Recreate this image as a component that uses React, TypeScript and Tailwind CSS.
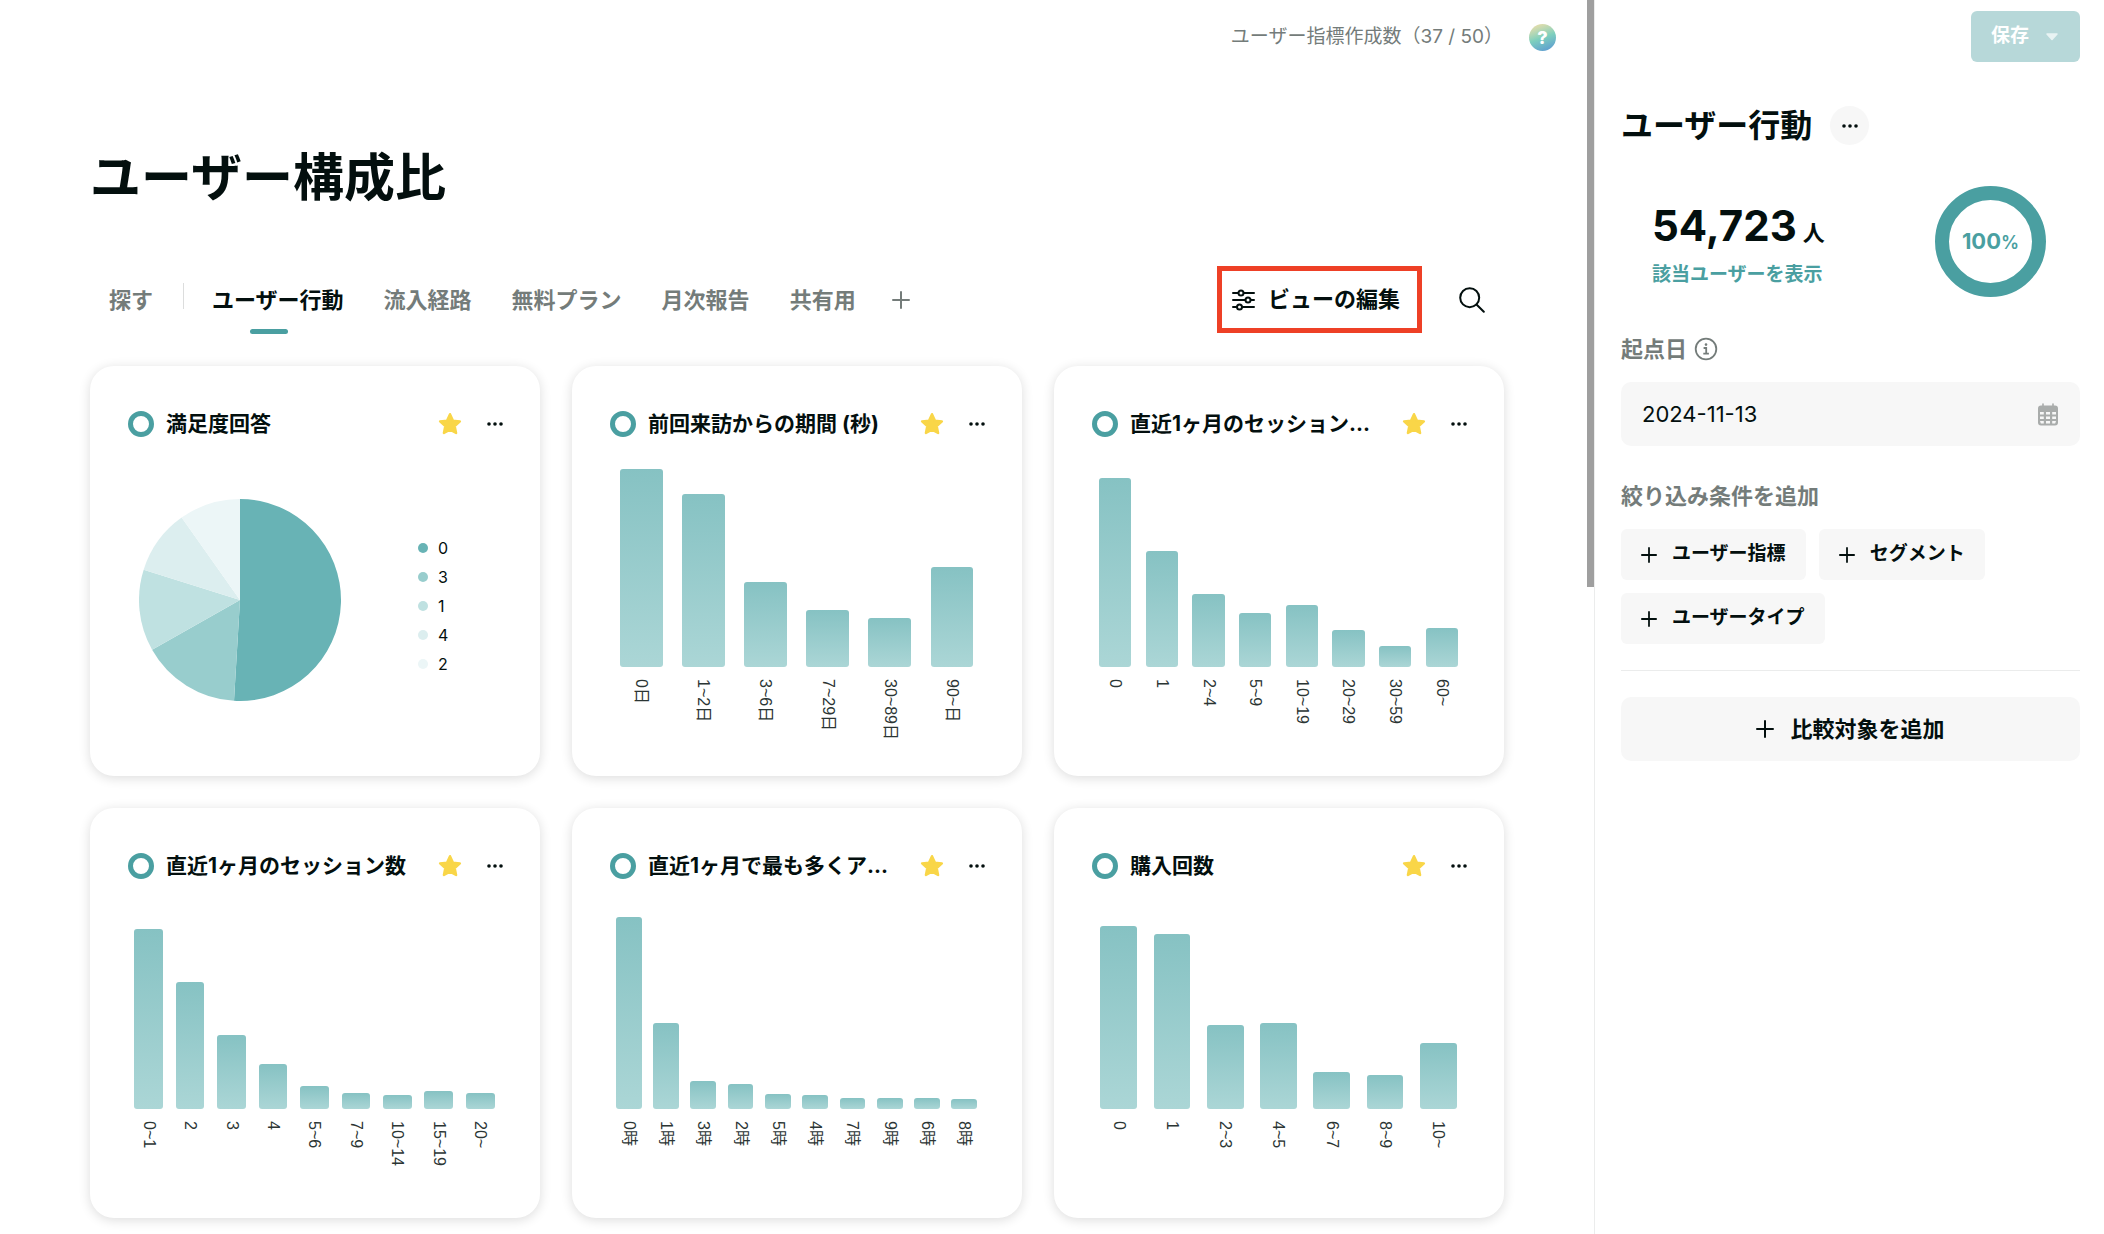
import React from "react";

interface Bar {
  label: string;
  value: number;
}

interface ChartData {
  title: string;
  bars?: Bar[];
}

const charts: ChartData[] = [
  { title: "満足度回答" },
  {
    title: "前回来訪からの期間 (秒)",
    bars: [
      { label: "0日", value: 198 },
      { label: "1~2日", value: 173 },
      { label: "3~6日", value: 85 },
      { label: "7~29日", value: 57 },
      { label: "30~89日", value: 49 },
      { label: "90~日", value: 100 },
    ],
  },
  {
    title: "直近1ヶ月のセッション...",
    bars: [
      { label: "0", value: 189 },
      { label: "1", value: 116 },
      { label: "2~4", value: 73 },
      { label: "5~9", value: 54 },
      { label: "10~19", value: 62 },
      { label: "20~29", value: 37 },
      { label: "30~59", value: 21 },
      { label: "60~", value: 39 },
    ],
  },
  {
    title: "直近1ヶ月のセッション数",
    bars: [
      { label: "0~1", value: 180 },
      { label: "2", value: 127 },
      { label: "3", value: 74 },
      { label: "4", value: 45 },
      { label: "5~6", value: 23 },
      { label: "7~9", value: 16 },
      { label: "10~14", value: 14 },
      { label: "15~19", value: 18 },
      { label: "20~", value: 16 },
    ],
  },
  {
    title: "直近1ヶ月で最も多くア...",
    bars: [
      { label: "0時", value: 192 },
      { label: "1時", value: 86 },
      { label: "3時", value: 28 },
      { label: "2時", value: 25 },
      { label: "5時", value: 15 },
      { label: "4時", value: 14 },
      { label: "7時", value: 11 },
      { label: "9時", value: 11 },
      { label: "6時", value: 11 },
      { label: "8時", value: 10 },
    ],
  },
  {
    title: "購入回数",
    bars: [
      { label: "0", value: 183 },
      { label: "1", value: 175 },
      { label: "2~3", value: 84 },
      { label: "4~5", value: 86 },
      { label: "6~7", value: 37 },
      { label: "8~9", value: 34 },
      { label: "10~", value: 66 },
    ],
  },
];

// start and end are degrees, clockwise from the top
const slices = [
  { label: "0", start: 0, end: 183.4, color: "#68b3b5" },
  { label: "3", start: 183.4, end: 240.5, color: "#98cdcd" },
  { label: "1", start: 240.5, end: 287.5, color: "#bfe1e1" },
  { label: "4", start: 287.5, end: 324.7, color: "#dceeef" },
  { label: "2", start: 324.7, end: 360, color: "#ecf6f7" },
];

const tabs = ["流入経路", "無料プラン", "月次報告", "共有用"];

const filters = ["ユーザー指標", "セグメント", "ユーザータイプ"];

const PlusIcon = ({ className }: { className: string }) => (
  <svg viewBox="0 0 18 18" className={className} fill="none" aria-hidden="true">
    <path
      d="M9 1v16M1 9h16"
      stroke="currentColor"
      strokeWidth="2"
      strokeLinecap="round"
    />
  </svg>
);

const DotsIcon = () => (
  <svg
    viewBox="0 0 16 4"
    className="w-4 h-1"
    fill="currentColor"
    aria-hidden="true"
  >
    <circle cx="2" cy="2" r="1.8" />
    <circle cx="8" cy="2" r="1.8" />
    <circle cx="14" cy="2" r="1.8" />
  </svg>
);

const StarIcon = () => (
  <svg viewBox="0 0 24 24" className="w-6 h-6" aria-hidden="true">
    <path
      d="M12 2.2l2.9 6.4 7 .8-5.2 4.7 1.4 6.9L12 17.6l-6.1 3.4 1.4-6.9L2.1 9.4l7-.8z"
      fill="#f9d648"
      stroke="#f9d648"
      strokeWidth="2.4"
      strokeLinejoin="round"
    />
  </svg>
);

const SlidersIcon = () => (
  <svg
    viewBox="0 0 23 22"
    className="w-[23px] h-[22px]"
    fill="none"
    stroke="currentColor"
    strokeWidth="2"
    strokeLinecap="round"
    aria-hidden="true"
  >
    <path d="M1 4h5M12 4h10M1 11h12M19 11h3M1 18h3.500M11 18h11" />
    <circle cx="9" cy="4" r="2.500" />
    <circle cx="16" cy="11" r="2.500" />
    <circle cx="7.500" cy="18" r="2.500" />
  </svg>
);

const SearchIcon = () => (
  <svg
    viewBox="0 0 26 26"
    className="w-[26px] h-[26px]"
    fill="none"
    stroke="currentColor"
    strokeWidth="2"
    strokeLinecap="round"
    aria-hidden="true"
  >
    <circle cx="10.700" cy="10.700" r="9.500" />
    <path d="M17.500 17.500l7.300 7.300" />
  </svg>
);

const InfoIcon = () => (
  <svg
    viewBox="0 0 24 24"
    className="w-6 h-6"
    fill="none"
    stroke="currentColor"
    strokeWidth="1.800"
    aria-hidden="true"
  >
    <circle cx="12" cy="12" r="10.300" />
    <path d="M9.600 11h2.600v5.600M9.300 16.600h5.600" />
    <circle cx="12" cy="7.600" r="1.300" fill="currentColor" stroke="none" />
  </svg>
);

const CalendarIcon = () => (
  <svg viewBox="0 0 20 23" className="w-5 h-[23px]" aria-hidden="true">
    <path
      d="M5 1v4M15 1v4"
      stroke="#a9acab"
      strokeWidth="1.600"
      strokeLinecap="round"
    />
    <rect x="0" y="2.500" width="20" height="20" rx="3" fill="#a9acab" />
    <path
      d="M2 9h3.800v2.500H2zM8 9h4v2.500H8zM14.200 9H18v2.500h-3.800zM2 13.500h3.800V16H2zM8 13.500h4V16H8zM14.200 13.500H18V16h-3.800zM2 18h3.800v2.500H2.800zM8 18h4v2.500H8zM14.200 18H18l-.8 2.500h-3z"
      fill="#f7f7f7"
    />
  </svg>
);

function point(angle: number) {
  const rad = (angle * Math.PI) / 180;
  return `${101 + 101 * Math.sin(rad)} ${101 - 101 * Math.cos(rad)}`;
}

const PieChart = () => (
  <div className="flex items-start gap-[77px] pl-[11px] pt-[62px]">
    <svg viewBox="0 0 202 202" className="w-[202px] h-[202px] shrink-0">
      {slices.map(({ label, start, end, color }) => (
        <path
          key={label}
          d={`M101 101L${point(start)}A101 101 0 ${
            end - start > 180 ? 1 : 0
          } 1 ${point(end)}z`}
          fill={color}
        />
      ))}
    </svg>
    <ul className="flex flex-col gap-[5px] pt-[37px]">
      {slices.map(({ label, color }) => (
        <li
          key={label}
          className="flex items-center gap-[10px] text-base leading-6"
        >
          <span
            className="w-[10px] h-[10px] rounded-full"
            style={{ backgroundColor: color }}
          ></span>
          {label}
        </li>
      ))}
    </ul>
  </div>
);

const BarChart = ({ bars }: { bars: Bar[] }) => (
  <div className="flex pr-px">
    {bars.map(({ label, value }) => (
      <div key={label} className="flex-1 flex flex-col items-center gap-3">
        <div className="h-[230px] w-full flex items-end justify-center">
          <div
            className="w-[69%] rounded-[3px] bg-linear-to-b from-[#86c2c3] to-[#abd6d6]"
            style={{ height: value }}
          ></div>
        </div>
        <span className="font-['Liberation_Sans','Noto_Sans_CJK_JP',sans-serif] text-base leading-4 text-[#2b3534] whitespace-nowrap [writing-mode:vertical-rl] [text-orientation:sideways]">
          {label}
        </span>
      </div>
    ))}
  </div>
);

const ChartCard = ({ title, bars }: ChartData) => (
  <article className="h-[410px] rounded-3xl bg-white px-[38px] pt-[45px] shadow-[0_2px_12px_rgba(0,0,0,0.14)]">
    <div className="flex items-center h-[26px]">
      <span className="w-[26px] h-[26px] shrink-0 rounded-full border-[5px] border-[#4a9fa1]"></span>
      <h2 className="ml-3 flex-1 min-w-0 truncate text-[21px] leading-[26px] font-bold">
        {title}
      </h2>
      <button aria-label="お気に入り" className="ml-6 cursor-pointer">
        <StarIcon />
      </button>
      <button
        aria-label="メニュー"
        className="w-6 h-6 ml-[21px] -mr-[5px] flex items-center justify-center cursor-pointer"
      >
        <DotsIcon />
      </button>
    </div>
    {bars ? <BarChart bars={bars} /> : <PieChart />}
  </article>
);

const Sidebar = () => (
  <aside className="w-[510px] shrink-0 border-l border-[#ebecec] pl-[26px] pr-6 pt-[11px]">
    <div className="flex justify-end">
      <button className="h-[51px] pl-5 pr-[21px] flex items-center gap-4 rounded-md bg-[#b7d8d9] text-white text-[19px] font-bold">
        保存
        <svg viewBox="0 0 14 8" className="w-[14px] h-2" aria-hidden="true">
          <path
            d="M2 1h10L7 6.500z"
            fill="#e8f3f3"
            stroke="#e8f3f3"
            strokeWidth="1.500"
            strokeLinejoin="round"
          />
        </svg>
      </button>
    </div>

    <div className="flex items-center gap-[18px] mt-11">
      <h2 className="text-[32px] leading-[39px] font-bold">ユーザー行動</h2>
      <button
        aria-label="メニュー"
        className="w-[39px] h-[39px] rounded-full bg-[#f7f7f7] flex items-center justify-center cursor-pointer"
      >
        <DotsIcon />
      </button>
    </div>

    <div className="flex items-center justify-between mt-[41px] pl-[31px] pr-[34px]">
      <div className="pt-[7px]">
        <p className="text-[42px] leading-[48px] font-bold">
          54,723 <span className="text-[22px] -ml-1">人</span>
        </p>
        <a
          href="#"
          className="block mt-1 text-[19px] leading-7 font-bold text-[#4a9fa1]"
        >
          該当ユーザーを表示
        </a>
      </div>
      <div className="w-[111px] h-[111px] rounded-full border-[14px] border-[#4a9fa1] flex items-center justify-center text-[#4a9fa1]">
        <p className="text-[22px] font-bold">
          100<span className="text-lg font-semibold">%</span>
        </p>
      </div>
    </div>

    <div className="mt-9 flex items-center gap-[7px] text-[22px] leading-8 font-bold text-[#747c7a]">
      <label htmlFor="base-date">起点日</label>
      <InfoIcon />
    </div>
    <div className="mt-[17px] h-16 pl-[21px] pr-[22px] flex items-center rounded-[10px] bg-[#f7f7f7]">
      <input
        id="base-date"
        type="text"
        defaultValue="2024-11-13"
        className="flex-1 min-w-0 text-[22px] bg-transparent outline-none"
      />
      <CalendarIcon />
    </div>

    <h3 className="mt-[34px] text-[22px] leading-8 font-bold text-[#747c7a]">
      絞り込み条件を追加
    </h3>
    <div className="mt-[17px] flex flex-wrap gap-[13px]">
      {filters.map((filter) => (
        <button
          key={filter}
          className="h-[51px] px-5 flex items-center gap-[15px] rounded-md bg-[#f7f7f7] text-[19px] font-bold cursor-pointer"
        >
          <PlusIcon className="w-4 h-4" />
          {filter}
        </button>
      ))}
    </div>

    <hr className="my-[26px] border-[#ebecec]" />
    <button className="w-full h-16 flex items-center justify-center gap-4 rounded-[10px] bg-[#f7f7f7] text-[22px] font-bold cursor-pointer">
      <PlusIcon className="w-[18px] h-[18px]" />
      比較対象を追加
    </button>
  </aside>
);

export default function App() {
  return (
    <div
      lang="ja"
      className="min-h-screen flex bg-white text-[#030f0e] font-['Inter','Noto_Sans_CJK_JP',sans-serif]"
    >
      <main className="flex-1 min-w-0 pl-[90px] pr-[83px] pb-4">
        <header className="h-[75px] -mr-[52px] flex items-center justify-end gap-[26px] text-[19px] text-[#747c7a]">
          <p>ユーザー指標作成数（37 / 50）</p>
          <button
            aria-label="ヘルプ"
            className="w-[27px] h-[27px] rounded-full bg-linear-160 from-[#f7dfa5] via-[#7fd0bd] to-[#5a93d2] text-white text-lg leading-none font-extrabold cursor-pointer"
          >
            ?
          </button>
        </header>

        <h1 className="mt-[73px] text-[51px] leading-[60px] font-bold">
          ユーザー構成比
        </h1>

        <div className="mt-[58px] h-[67px] flex items-center justify-between">
          <nav className="pl-[19px] flex items-center text-[22px] leading-8 font-bold text-[#747c7a]">
            <button className="cursor-pointer">探す</button>
            <span className="w-px h-[26px] ml-[30px] mr-7 mb-2 bg-[#dcdddd]"></span>
            <button className="relative text-[#030f0e] cursor-pointer">
              ユーザー行動
              <span className="absolute left-[38px] top-[45px] w-[38px] h-[5px] rounded-full bg-[#4a9fa1]"></span>
            </button>
            {tabs.map((tab) => (
              <button key={tab} className="ml-10 cursor-pointer">
                {tab}
              </button>
            ))}
            <button aria-label="タブを追加" className="ml-9 cursor-pointer">
              <PlusIcon className="w-[18px] h-[18px]" />
            </button>
          </nav>
          <div className="flex items-center gap-[37px] pr-[19px]">
            <button className="h-[67px] pl-[10px] pr-[17px] flex items-center gap-[13px] border-[5px] border-[#ee4026] text-[22px] font-bold cursor-pointer">
              <SlidersIcon />
              ビューの編集
            </button>
            <button aria-label="検索" className="cursor-pointer">
              <SearchIcon />
            </button>
          </div>
        </div>

        <section className="mt-[33px] grid grid-cols-3 gap-8">
          {charts.map((chart) => (
            <ChartCard key={chart.title} {...chart} />
          ))}
        </section>
      </main>
      {/* scrollbar thumb */}
      <div className="w-[7px] h-[587px] shrink-0 bg-[#9f9f9f]"></div>
      <Sidebar />
    </div>
  );
}
